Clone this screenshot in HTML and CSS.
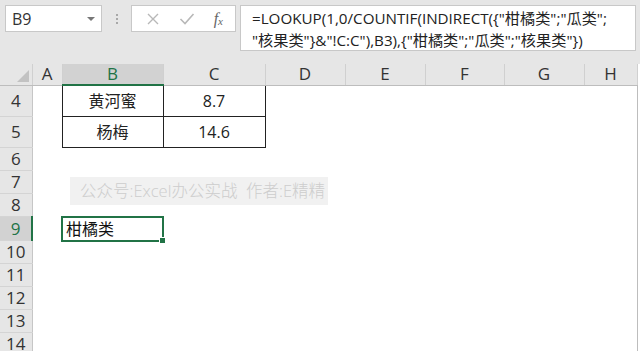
FILE: index.html
```html
<!DOCTYPE html>
<html lang="zh-CN">
  <head>
    <meta charset="UTF-8" />
    <meta name="viewport" content="width=device-width, initial-scale=1.0" />
    <title>LOOKUP INDIRECT</title>
    <link rel="stylesheet" href="styles.css">
  </head>
  <body>
    <div class="formula-bar">
      <div class="name-box">
        <span>B9</span>
        <span class="caret"></span>
      </div>
      <div class="grip"><i></i><i></i><i></i></div>
      <div class="fx-box">
        <svg width="14" height="14" viewBox="0 0 14 14"><path d="M2 2 L12 12 M12 2 L2 12" stroke="#b8b8b8" stroke-width="1.4" fill="none"/></svg>
        <svg width="16" height="14" viewBox="0 0 16 14"><path d="M1.5 7 L6 11.5 L14.5 2" stroke="#b8b8b8" stroke-width="1.6" fill="none"/></svg>
        <span class="fx">f<sub>x</sub></span>
      </div>
      <div class="formula">=LOOKUP(1,0/COUNTIF(INDIRECT({"柑橘类";"瓜类";<br>"核果类"}&amp;"!C:C"),B3),{"柑橘类";"瓜类";"核果类"})</div>
    </div>

    <div class="sheet">
      <table class="grid">
        <colgroup>
          <col class="c-head" /><col class="c-a" /><col class="c-b" /><col class="c-c" />
          <col class="c-d" /><col class="c-e" /><col class="c-f" /><col class="c-g" /><col class="c-h" />
        </colgroup>
        <tr class="r-head">
          <th class="corner"><span class="tri"></span></th>
          <th>A</th><th class="sel-col">B</th><th>C</th><th>D</th><th>E</th><th>F</th><th>G</th><th class="last">H</th>
        </tr>
        <tr class="r-tall">
          <th>4</th><td></td><td class="box">黄河蜜</td><td class="box">8.7</td><td></td><td></td><td></td><td></td><td class="last"></td>
        </tr>
        <tr class="r-tall">
          <th>5</th><td></td><td class="box">杨梅</td><td class="box">14.6</td><td></td><td></td><td></td><td></td><td class="last"></td>
        </tr>
        <tr><th>6</th><td></td><td></td><td></td><td></td><td></td><td></td><td></td><td class="last"></td></tr>
        <tr><th>7</th><td></td><td></td><td></td><td></td><td></td><td></td><td></td><td class="last"></td></tr>
        <tr><th>8</th><td></td><td></td><td></td><td></td><td></td><td></td><td></td><td class="last"></td></tr>
        <tr>
          <th class="sel-row">9</th><td></td>
          <td class="active"><span class="active-text">柑橘类</span><span class="handle"></span></td>
          <td></td><td></td><td></td><td></td><td></td><td class="last"></td>
        </tr>
        <tr><th>10</th><td></td><td></td><td></td><td></td><td></td><td></td><td></td><td class="last"></td></tr>
        <tr><th>11</th><td></td><td></td><td></td><td></td><td></td><td></td><td></td><td class="last"></td></tr>
        <tr><th>12</th><td></td><td></td><td></td><td></td><td></td><td></td><td></td><td class="last"></td></tr>
        <tr><th>13</th><td></td><td></td><td></td><td></td><td></td><td></td><td></td><td class="last"></td></tr>
        <tr><th>14</th><td></td><td></td><td></td><td></td><td></td><td></td><td></td><td class="last"></td></tr>
      </table>
      <div class="watermark">公众号:Excel办公实战&nbsp;&nbsp;作者:E精精</div>
    </div>
  </body>
</html>
```

FILE: styles.css
```css
html,
body {
  height: 351px;
  overflow: hidden;
}

body {
  margin: 0;
  background-color: #e6e6e6;
  font-family: "Open Sans", "Noto Sans CJK SC", sans-serif;
  color: #222;
}

.formula-bar {
  display: flex;
  align-items: flex-start;
  height: 64px;
  padding: 5px 4px 0 5px;
  box-sizing: border-box;
}

.name-box {
  width: 97px;
  height: 27px;
  box-sizing: border-box;
  background: #fff;
  border: 1px solid #c8c8c8;
  display: flex;
  align-items: center;
  justify-content: space-between;
  padding: 0 6px 0 6px;
  font-size: 16px;
  color: #333;
}

.caret {
  width: 0;
  height: 0;
  border-left: 4px solid transparent;
  border-right: 4px solid transparent;
  border-top: 4px solid #777;
}

.grip {
  width: 29px;
  height: 27px;
  display: flex;
  flex-direction: column;
  align-items: center;
  justify-content: center;
  gap: 2px;
}

.grip i {
  width: 2px;
  height: 2px;
  background: #a8a8a8;
}

.fx-box {
  width: 105px;
  height: 27px;
  box-sizing: border-box;
  background: #fff;
  border: 1px solid #c8c8c8;
  display: flex;
  align-items: center;
  justify-content: space-between;
  padding: 0 12px 0 14px;
}

.fx {
  font-family: "Liberation Serif", serif;
  font-style: italic;
  font-size: 16px;
  color: #666;
}

.fx sub {
  font-size: 11px;
  vertical-align: -1px;
}

.formula {
  flex: 1;
  height: 46px;
  margin-left: 4px;
  box-sizing: border-box;
  background: #fff;
  border: 1px solid #c8c8c8;
  padding: 1px 0 0 11px;
  font-size: 15.2px;
  line-height: 22px;
  color: #222;
  white-space: nowrap;
  overflow: hidden;
}

.sheet {
  position: relative;
  background: #fff;
}

.grid {
  border-collapse: collapse;
  table-layout: fixed;
  width: 637px;
}

.c-head { width: 32px; }
.c-a { width: 30px; }
.c-b { width: 101px; }
.c-c { width: 102px; }
.c-d { width: 80px; }
.c-e { width: 80px; }
.c-f { width: 79px; }
.c-g { width: 80px; }
.c-h { width: 53px; }

.grid th,
.grid td {
  padding: 0;
  height: 22px;
  line-height: 20px;
}

.grid th {
  background: #e6e6e6;
  font-weight: normal;
  font-size: 17px;
  color: #333;
  border-right: 1px solid #c6c6c6;
  border-bottom: 1px solid #d4d4d4;
}

.r-head th {
  height: 20px;
  border-right: 1px solid #d0d0d0;
  border-bottom: 1px solid #bdbdbd;
}

.r-tall th,
.r-tall td {
  height: 30px;
}

.grid td.last {
  border-right: 1px solid #bdbdbd;
}

.corner {
  position: relative;
}

.tri {
  position: absolute;
  right: 3px;
  bottom: 3px;
  width: 0;
  height: 0;
  border-left: 12px solid transparent;
  border-bottom: 12px solid #c2c2c2;
}

.grid th.sel-col {
  background: #d2d2d2;
  color: #217346;
  border-bottom: 2px solid #217346;
}

.grid th.sel-row {
  background: #d2d2d2;
  color: #217346;
  border-right: 2px solid #217346;
}

.box {
  border: 1px solid #222;
  text-align: center;
  font-size: 16px;
  color: #222;
}

.grid td.active {
  position: relative;
  border: 2px solid #217346;
  font-size: 16px;
  color: #111;
  padding-left: 3px;
}

.handle {
  position: absolute;
  right: -4px;
  bottom: -4px;
  width: 5px;
  height: 5px;
  background: #217346;
  border: 1px solid #fff;
}

.watermark {
  position: absolute;
  left: 70px;
  top: 113px;
  width: 258px;
  height: 28px;
  background: #f1f1f1;
  color: #cdcdcd;
  font-size: 16.5px;
  font-weight: 300;
  line-height: 28px;
  padding-left: 10px;
  box-sizing: border-box;
  white-space: nowrap;
}
```
